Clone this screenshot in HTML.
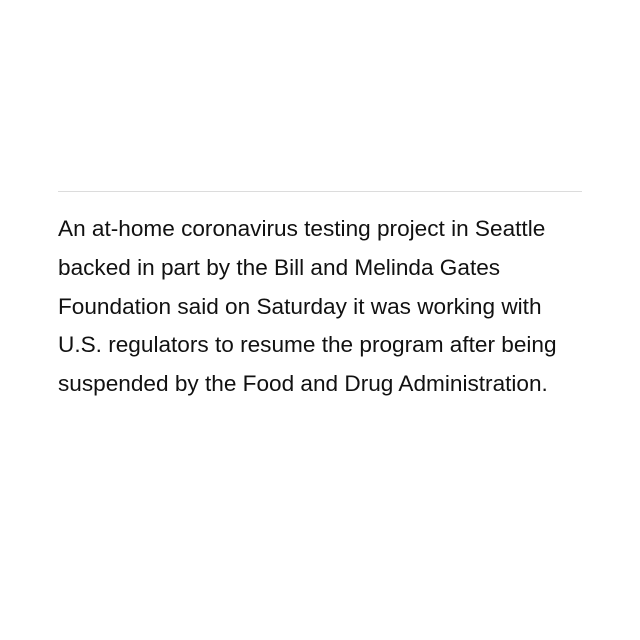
<!DOCTYPE html>
<html><head><style>
html,body{margin:0;padding:0;background:#fff;width:640px;height:640px;overflow:hidden}
.hr{position:absolute;left:58px;top:191px;width:524px;height:1px;background:#dcdcdc}
p{position:absolute;left:58px;top:210px;margin:0;width:580px;white-space:nowrap;font-family:"Liberation Sans",Arial,sans-serif;font-size:22.6px;line-height:38.8px;color:#111}
</style></head><body>
<div class="hr"></div>
<p>An at-home coronavirus testing project in Seattle<br>backed in part by the Bill and Melinda Gates<br>Foundation said on Saturday it was working with<br>U.S. regulators to resume the program after being<br>suspended by the Food and Drug Administration.</p>
</body></html>
